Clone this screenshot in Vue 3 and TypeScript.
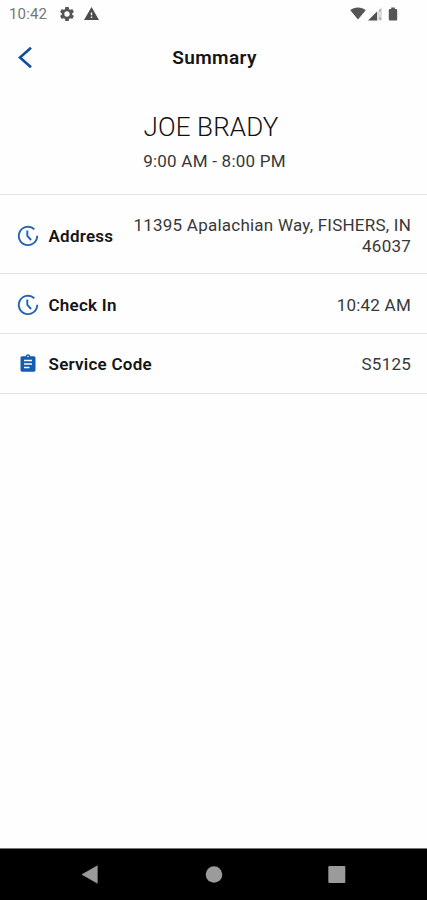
<script setup lang="ts">
interface SummaryRow {
  id: string
  icon: 'clock' | 'clipboard'
  label: string
  value: string
}

const rows: SummaryRow[] = [
  { id: 'address', icon: 'clock', label: 'Address', value: '11395 Apalachian Way, FISHERS, IN 46037' },
  { id: 'checkin', icon: 'clock', label: 'Check In', value: '10:42 AM' },
  { id: 'service', icon: 'clipboard', label: 'Service Code', value: 'S5125' },
]
</script>

<template>
  <div class="screen">
    <div class="status">
      <span class="time">10:42</span>
      <svg class="gear" viewBox="2 2 20 20" width="14" height="14">
        <path fill="#555" fill-rule="evenodd" d="M19.43 12.98c.04-.32.07-.64.07-.98s-.03-.66-.07-.98l2.11-1.65c.19-.15.24-.42.12-.64l-2-3.46c-.12-.22-.39-.3-.61-.22l-2.49 1c-.52-.4-1.08-.73-1.69-.98l-.38-2.65C14.46 2.18 14.25 2 14 2h-4c-.25 0-.46.18-.49.42l-.38 2.65c-.61.25-1.17.59-1.69.98l-2.49-1c-.23-.09-.49 0-.61.22l-2 3.46c-.13.22-.07.49.12.64l2.11 1.65c-.04.32-.07.65-.07.98s.03.66.07.98l-2.11 1.65c-.19.15-.24.42-.12.64l2 3.46c.12.22.39.3.61.22l2.49-1c.52.4 1.08.73 1.69.98l.38 2.65c.03.24.24.42.49.42h4c.25 0 .46-.18.49-.42l.38-2.65c.61-.25 1.17-.59 1.69-.98l2.49 1c.23.09.49 0 .61-.22l2-3.46c.12-.22.07-.49-.12-.64l-2.11-1.65zM12 15.8a3.8 3.8 0 1 1 0-7.6 3.8 3.8 0 0 1 0 7.6z" />
      </svg>
      <svg class="warn" viewBox="1 2 22 19" width="15" height="13">
        <path fill="#4c4c4c" d="M1 21h22L12 2 1 21zm12-3h-2v-2h2v2zm0-4h-2v-4h2v4z" />
      </svg>
      <svg class="wifi" viewBox="0 0 16 13" width="16" height="13">
        <path fill="#555" d="M8 12.6 0.3 3.2C2.4 1.4 5 .4 8 .4s5.600 1 7.700 2.800z" />
      </svg>
      <svg class="signal" viewBox="0 0 14 14" width="14" height="14">
        <path fill="#ddd" d="M9 5 14 0v13.500H9z" />
        <path fill="#505050" d="M0 13.500 9 4.500v9z" />
        <path fill="#aaa" d="M11 2.500h2v2h-2zM11 10.500h2v2h-2z" />
      </svg>
      <svg class="battery" viewBox="0 0 10 14" width="10" height="14">
        <path fill="#555" d="M3.200.5h3.600V2h1.400q1 0 1 1.300v9q0 1.200-1 1.200H1.800q-1 0-1-1.200v-9Q.8 2 1.800 2h1.400z" />
      </svg>
    </div>

    <header class="bar">
      <svg class="back" viewBox="0 0 16 24" width="16" height="24">
        <path d="M14 1.800 3 11.500l11 9.700" fill="none" stroke="#0d4fa3" stroke-width="2.600" />
      </svg>
      <h1 class="title">Summary</h1>
    </header>

    <section class="person">
      <div class="name">JOE BRADY</div>
      <div class="hours">9:00 AM - 8:00 PM</div>
    </section>

    <main class="rows">
      <div v-for="row in rows" :key="row.id" class="row" :class="row.id">
        <svg v-if="row.icon === 'clock'" class="icon" viewBox="0 0 22 22" width="22" height="22">
          <path d="M17.300 4.200A9.200 9.200 0 1 0 20.200 10.800" fill="none" stroke="#2463ae" stroke-width="1.900" />
          <path d="M10.300 5.500v5.300l3.800 4.200" fill="none" stroke="#2463ae" stroke-width="1.900" />
        </svg>
        <svg v-else class="icon" viewBox="0 0 22 22" width="22" height="22">
          <path fill="#155bb0" d="M5.100 3.200h3.400a2.600 2.600 0 0 1 5 0h3.400q1.600 0 1.600 1.600v12.300q0 1.600-1.600 1.600H5.100q-1.600 0-1.600-1.600V4.800q0-1.600 1.600-1.600z" />
          <path d="M7 7.500h8M7 11h8M7 14.500h5.500" stroke="#fff" stroke-width="1.600" />
          <circle cx="11" cy="3.500" r=".8" fill="#fff" />
        </svg>
        <span class="label">{{ row.label }}</span>
        <span class="value">{{ row.value }}</span>
      </div>
    </main>

    <nav class="nav">
      <svg viewBox="0 0 20 20" width="20" height="20"><path d="M2 9.500 17.300.8v17.400z" fill="#9b9b9b" stroke="#9b9b9b" stroke-width=".6" stroke-linejoin="round" /></svg>
      <svg viewBox="0 0 20 20" width="20" height="20"><circle cx="10" cy="9.500" r="8.300" fill="#9b9b9b" /></svg>
      <svg viewBox="0 0 20 20" width="20" height="20"><rect x="1.300" y="1" width="17" height="17" rx="1" fill="#9b9b9b" /></svg>
    </nav>
  </div>
</template>

<style>
body {
  margin: 0;
  background: #fff;
}
</style>

<style scoped>
.screen {
  display: flex;
  flex-direction: column;
  width: 427px;
  height: 900px;
  overflow: hidden;
  background: #fefefe;
  color: #111;
  font-family: Roboto, "Liberation Sans", sans-serif;
}
.status {
  display: flex;
  align-items: center;
  box-sizing: border-box;
  height: 28px;
  padding: 0 29px 0 9px;
}
.time {
  width: 51px;
  color: #777;
  font-size: 15px;
  letter-spacing: 0.15px;
}
.gear,
.warn,
.wifi,
.signal,
.battery {
  margin-bottom: 1px;
}
.warn {
  margin-left: 10px;
}
.wifi {
  margin-left: auto;
}
.signal {
  margin-left: 2px;
}
.battery {
  margin-left: 6px;
}
.bar {
  display: grid;
  grid-template-columns: 61px 1fr 59px;
  align-items: center;
  height: 60px;
}
.back {
  margin-left: 17px;
}
.title {
  margin: 0;
  color: #151515;
  font-size: 19px;
  font-weight: 600;
  line-height: 24px;
  letter-spacing: 0.4px;
  text-align: center;
}
.person {
  box-sizing: border-box;
  height: 107px;
  padding-top: 23px;
  border-bottom: 1px solid #e5e5e5;
  text-align: center;
}
.name {
  padding-right: 5px;
  font-size: 26px;
  font-weight: 300;
  line-height: 33px;
  letter-spacing: 0.15px;
}
.hours {
  margin-top: 6px;
  padding-left: 2px;
  color: #383838;
  font-size: 17px;
  line-height: 22px;
  letter-spacing: 0.24px;
}
.row {
  display: flex;
  align-items: center;
  box-sizing: border-box;
  height: 60px;
  padding: 0 16px 0 17px;
  border-bottom: 1px solid #e5e5e5;
}
.row.address {
  height: 79px;
  padding-top: 3px;
}
.row.checkin {
  padding-top: 2px;
}
.icon {
  flex: none;
}
.label {
  flex: none;
  margin-left: 9.500px;
  color: #151515;
  font-size: 17px;
  font-weight: 600;
  line-height: 20px;
  letter-spacing: 0.25px;
}
.value {
  flex: 1;
  margin-left: 12px;
  color: #383838;
  font-size: 17px;
  line-height: 20px;
  letter-spacing: 0.23px;
  text-align: right;
}
.address .value {
  line-height: 21px;
}
.nav {
  display: flex;
  align-items: center;
  justify-content: space-between;
  box-sizing: border-box;
  height: 52px;
  margin-top: auto;
  padding: 0 80px;
  border-top: 1px solid #777;
  background: #000;
}
</style>
